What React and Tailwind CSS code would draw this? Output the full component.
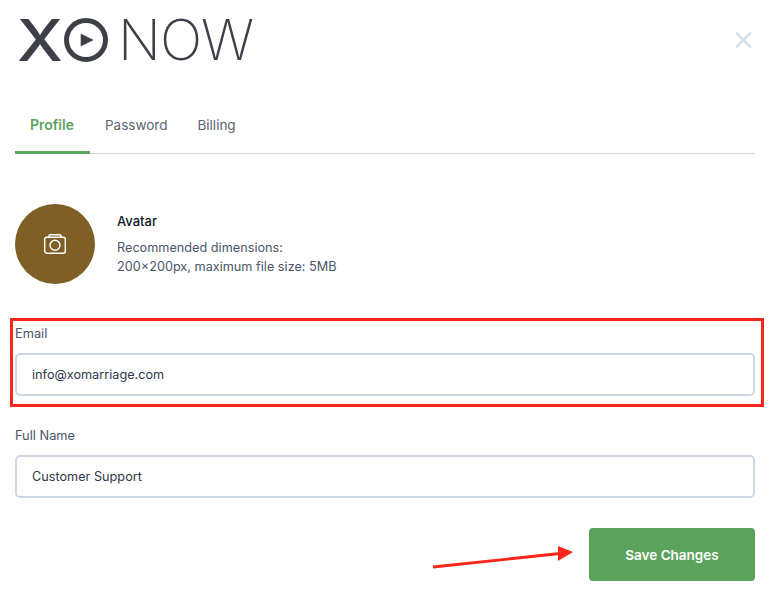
import React from "react";

const Field = ({ label, value }) => (
  <div>
    <label className="block pt-[1px] text-[12.8px] leading-5 text-[#4a5568]">{label}</label>
    <input
      type="text"
      readOnly
      value={value}
      className="mt-[9px] w-full h-[43px] px-[15px] pb-[1px] border-2 border-[#cfd9e3] rounded-[5px] text-[12.7px] text-[#2d3748] outline-none"
    />
  </div>
);

const Logo = () => (
  <div className="flex items-center h-[80px] pl-[3px] text-[#3d4047] leading-none">
    <span className="inline-block w-[44px] text-center text-[57px] font-medium scale-x-[1.15]">X</span>
    <svg width="46" height="46" viewBox="0 0 46 46" className="ml-[1px]">
      <circle cx="23" cy="23" r="19.5" fill="none" stroke="currentColor" strokeWidth="5" />
      <path d="M18 17 L30 23 L18 29 Z" fill="currentColor" stroke="currentColor" strokeWidth="0.6" />
    </svg>
    <span className="ml-[9px] text-[56px] font-extralight tracking-[-1px]">NOW</span>
  </div>
);

const CameraIcon = () => (
  <svg width="24" height="24" viewBox="0 0 24 24" fill="none" stroke="currentColor" strokeWidth="1.4">
    <rect x="1.7" y="5.2" width="20.6" height="16" rx="2" />
    <path d="M6 5 V3.8 a1 1 0 0 1 1 -1 H17 a1 1 0 0 1 1 1 V5" />
    <circle cx="12" cy="13.2" r="5" />
  </svg>
);

const App = () => {
  return (
    <div className="relative w-[773px] h-[606px] bg-white overflow-hidden font-['Inter',sans-serif]">
      <div className="pl-[15px] pr-[18px]">
        <div className="flex justify-between">
          <Logo />
          <button className="mt-[28px] h-6 text-[#d3dce4]">
            <svg width="24" height="24" viewBox="0 0 24 24" fill="none" stroke="currentColor" strokeWidth="2.4">
              <path d="M5 4.5 L20 19.5 M20 4.5 L5 19.5" />
            </svg>
          </button>
        </div>

        <div className="flex mt-[17px] border-b border-[#cfd9e3] h-[57px] text-[13.5px]">
          <div className="px-[15px] pt-[18px] w-[75px] h-[57px] border-b-[3px] border-[#5ba35b] text-sm font-semibold text-[#5ba35b]">Profile</div>
          <div className="px-[15px] pt-[18px] text-[#5a6472]">Password</div>
          <div className="px-[15px] pt-[18px] text-[#5a6472]">Billing</div>
        </div>

        <div className="flex mt-[50px] gap-[22px]">
          <div className="w-20 h-20 rounded-full bg-[#7f5f26] flex items-center justify-center text-white">
            <CameraIcon />
          </div>
          <div className="pt-[7px]">
            <div className="text-[13px] font-medium leading-5 text-[#111827]">Avatar</div>
            <div className="mt-[7px] text-[12.7px] leading-[19px] text-[#4a5568]">
              Recommended dimensions:
              <br />
              200×200px, maximum file size: 5MB
            </div>
          </div>
        </div>

        <div className="mt-[39px]">
          <Field label="Email" value="info@xomarriage.com" />
        </div>
        <div className="mt-[29px]">
          <Field label="Full Name" value="Customer Support" />
        </div>

        <div className="flex justify-end mt-[30px]">
          <button className="w-[166px] h-[53px] pt-[2px] rounded-[4px] bg-[#5ba35b] text-white text-[13.5px] font-semibold">
            Save Changes
          </button>
        </div>
      </div>

      {/* annotations */}
      <div className="absolute left-[10px] top-[318px] w-[754px] h-[89px] border-[3px] border-[#fb2519]" />
      <svg className="absolute left-[430px] top-[545px]" width="146" height="26" viewBox="0 0 146 26">
        <path d="M3 22 L130 8.5" stroke="#fb2519" strokeWidth="2.8" fill="none" />
        <path d="M128 1 L143 7 L128 16 Z" fill="#fb2519" />
      </svg>
    </div>
  );
};

export default App;
